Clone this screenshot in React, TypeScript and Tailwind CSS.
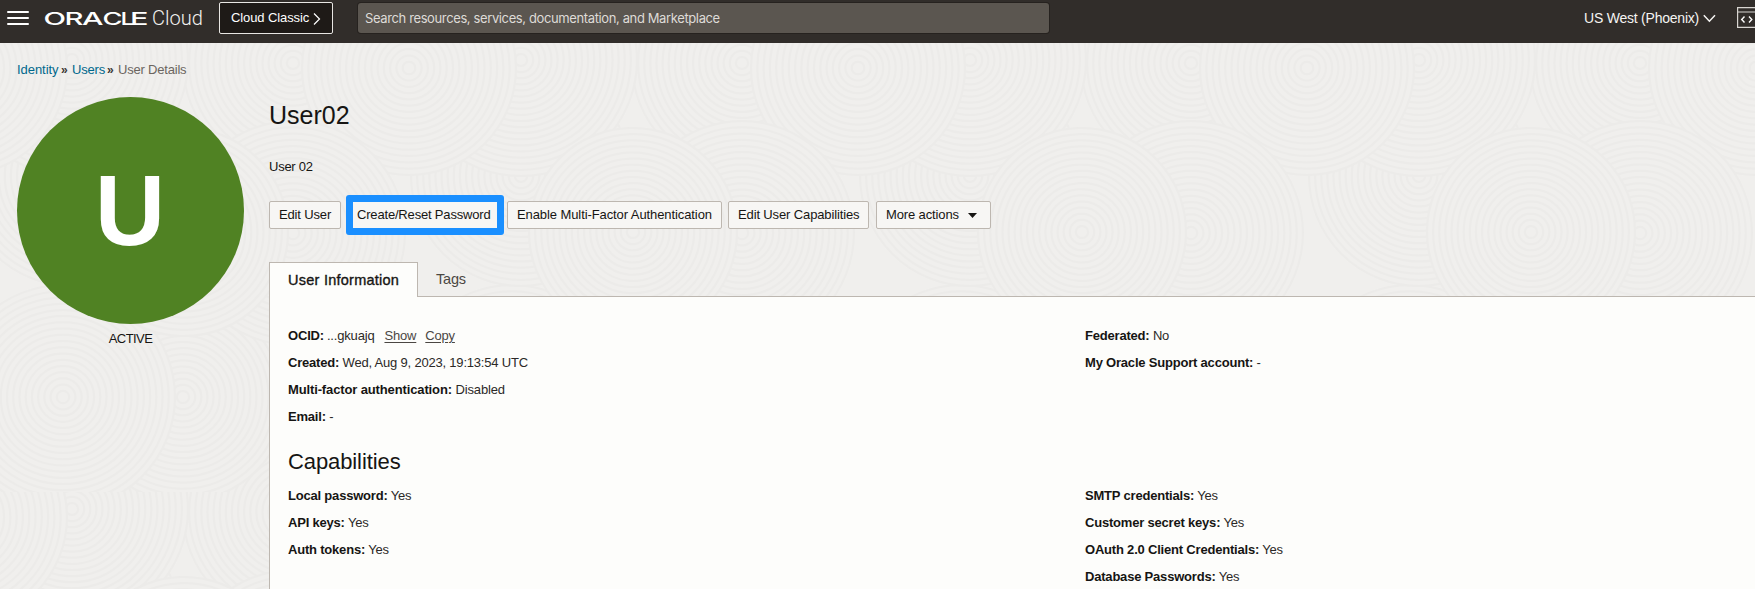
import type { ReactNode } from "react";

type Disc = { cx: number; cy: number; r: number };

const TILE = 449;

const discs: Disc[] = [
  { cx: 113, cy: 469, r: 110 },
  { cx: 341, cy: 466, r: 116 },
  { cx: 229, cy: 474, r: 107 },
  { cx: 3, cy: 354, r: 104 },
  { cx: 332, cy: 354, r: 112 },
  { cx: 341, cy: 133, r: 110 },
  { cx: 113, cy: 20, r: 110 },
  { cx: 341, cy: 17, r: 116 },
  { cx: 229, cy: 25, r: 107 },
  { cx: 113, cy: 190, r: 112 },
  { cx: 4, cy: 189, r: 104 },
];

function Rings({ cx, cy, r }: Disc) {
  const count = Math.floor(r / 6);
  return (
    <g>
      <circle cx={cx} cy={cy} r={r} fill="#f0efed" />
      {Array.from({ length: count }, (_, i) => (
        <circle key={i} cx={cx} cy={cy} r={(r * (i + 1)) / count} fill="none" stroke="#ecebe9" strokeWidth="2" />
      ))}
    </g>
  );
}

function Backdrop() {
  return (
    <svg className="absolute inset-0 h-full w-full" aria-hidden="true">
      <defs>
        <pattern id="rings" x="180" y="0" width={TILE} height={TILE} patternUnits="userSpaceOnUse">
          {discs.map((d, i) => (
            <g key={i}>
              <Rings {...d} />
              <Rings {...d} cx={d.cx < TILE / 2 ? d.cx + TILE : d.cx - TILE} />
            </g>
          ))}
        </pattern>
      </defs>
      <rect width="100%" height="100%" fill="url(#rings)" />
    </svg>
  );
}

const wordmark = [
  { ch: "O", x: -0.5, w: 22.5 },
  { ch: "R", x: 20.5, w: 19 },
  { ch: "A", x: 38, w: 21.5 },
  { ch: "C", x: 58.5, w: 20 },
  { ch: "L", x: 76.5, w: 14 },
  { ch: "E", x: 86, w: 18.5 },
];

function Header() {
  return (
    <header className="flex h-[43px] shrink-0 items-start overflow-hidden bg-[#312d2a] text-[#f5f4f2]">
      <div className="mt-[11px] ml-[7px] flex w-[22px] shrink-0 flex-col gap-[4px]">
        <span className="h-[2px] rounded-full bg-white" />
        <span className="h-[2px] rounded-full bg-white" />
        <span className="h-[2px] rounded-full bg-white" />
      </div>
      <svg className="mt-[6px] ml-[15px] shrink-0" width="160" height="26" viewBox="0 0 160 26">
        {wordmark.map(({ ch, x, w }) => (
          <text key={ch} x={x} y="19" textLength={w} lengthAdjust="spacingAndGlyphs" fill="#fff" className="font-['Inter'] text-[17.5px] font-medium">{ch}</text>
        ))}
        <text x="108" y="19" textLength="51" lengthAdjust="spacingAndGlyphs" fill="#f2f1ef" className="font-['Roboto'] text-[19.5px] font-light">Cloud</text>
      </svg>
      <button className="mt-[2px] ml-[15px] flex h-[32px] w-[114px] shrink-0 items-center rounded-[2px] border border-[#e8e6e3] bg-[#1e1a17] pl-[11px] text-[13px] tracking-[-0.1px] text-white">
        <span className="w-[82px] text-left">Cloud Classic</span>
        <svg className="mt-[2px]" width="8" height="12" viewBox="0 0 8 12" fill="none" stroke="currentColor" strokeWidth="1.2"><path d="M1 0.5 6.5 6 1 11.5" /></svg>
      </button>
      <div className="mt-[3px] ml-[25px] h-[30px] w-[691px] shrink-0 rounded-[3px] bg-[#5b5650] pl-[7px] font-['Inter'] text-[13px] leading-[31px] tracking-[-0.38px] text-[#dedbd7] shadow-[0_0_0_1px_#26221f]">
        Search resources, services, documentation, and Marketplace
      </div>
      <div className="mt-[6px] ml-[535px] flex h-[24px] shrink-0 items-center text-[14px] tracking-[-0.22px]">
        <span className="w-[119px]">US West (Phoenix)</span>
        <svg className="mr-px" width="13" height="9" viewBox="0 0 13 9" fill="none" stroke="currentColor" strokeWidth="1.5"><path d="M0.8 1.2 6.4 7.2 12 1.2" /></svg>
      </div>
      <svg className="mt-[7px] ml-[20px] shrink-0" width="26" height="22" viewBox="0 0 26 22" fill="none" stroke="#d8d5d1">
        <path d="M0.6 0.6H25.4V20.4H0.6Z M0.6 5H25.4" strokeWidth="1.2" />
        <path d="M7.5 9.5 4.7 12.5 7.5 15.5 M12 9.5 14.8 12.5 12 15.5" stroke="#fff" strokeWidth="1.4" />
      </svg>
    </header>
  );
}

function Action({ className, children }: { className: string; children: ReactNode }) {
  return (
    <button className={`flex h-[28px] shrink-0 items-center rounded-[2px] border border-[#bdb7b0] bg-[#f7f6f4] pl-[9px] text-[13px] whitespace-nowrap ${className}`}>
      {children}
    </button>
  );
}

function Field({ label, value }: { label: string; value: string }) {
  return (
    <div className="h-[27px] text-[13px] leading-[27px] tracking-[-0.2px] whitespace-nowrap">
      <b>{label}:</b> <span className="text-[#2b2927]">{value}</span>
    </div>
  );
}

export default function App() {
  return (
    <div className="flex h-[589px] w-[1755px] flex-col overflow-hidden bg-[#f0efed] font-['Liberation_Sans',Arial,sans-serif] text-[#161513]">
      <Header />
      <div className="relative flex-1 overflow-hidden">
        <Backdrop />
        <div className="relative flex h-full flex-col">
          <nav className="flex h-[54px] shrink-0 items-start pt-[17px] pl-[17px] text-[13px] leading-[20px] tracking-[-0.2px] text-[#00688c]">
            <a className="w-[44px] tracking-[-0.05px]">Identity</a>
            <span className="w-[11px] text-[12px] font-bold text-[#3a3632]">»</span>
            <a className="w-[35px]">Users</a>
            <span className="w-[11px] text-[12px] font-bold text-[#3a3632]">»</span>
            <span className="text-[#6b6560]">User Details</span>
          </nav>
          <div className="flex min-h-0 flex-1">
            <aside className="flex w-[269px] shrink-0 flex-col pl-[17px]">
              <div className="flex h-[227px] w-[227px] items-center justify-center rounded-full bg-[#508223] pb-[2px] text-[100px] leading-none font-bold text-white">
                <span className="scale-x-[0.97]">U</span>
              </div>
              <div className="w-[227px] pt-[5px] text-center text-[13px] leading-[20px] tracking-[-0.55px]">ACTIVE</div>
            </aside>
            <main className="flex min-w-0 flex-1 flex-col">
              <h1 className="h-[60px] shrink-0 pt-px text-[25px] leading-[34px]">User02</h1>
              <p className="h-[44px] shrink-0 text-[13px] leading-[19px] tracking-[-0.25px]">User 02</p>
              <div className="flex h-[61px] shrink-0 items-start">
                <Action className="w-[72px] tracking-[-0.15px]">Edit User</Action>
                <div className="mt-[-6px] ml-[5px] flex h-[40px] w-[158px] shrink-0 items-center rounded-[3px] border-[7px] border-[#1a8fff] bg-[#f7f6f4] pl-[4px] text-[13px] tracking-[-0.18px] whitespace-nowrap">Create/Reset Password</div>
                <Action className="ml-[3px] w-[215px] tracking-[-0.09px]">Enable Multi-Factor Authentication</Action>
                <Action className="ml-[6px] w-[141px] tracking-[-0.13px]">Edit User Capabilities</Action>
                <Action className="ml-[7px] w-[115px] tracking-[-0.13px]">
                  <span className="w-[82px] text-left">More actions</span>
                  <svg width="9" height="5" viewBox="0 0 9 5"><path d="M0 0H9L4.5 5Z" fill="#161513" /></svg>
                </Action>
              </div>
              <div className="flex h-[34px] shrink-0 text-[14.5px]">
                <div className="z-10 -mb-px w-[149px] border border-b-0 border-[#bdb7b0] bg-[#fdfdfb] pl-[18px] leading-[35px] tracking-[0.25px] [-webkit-text-stroke:0.35px_#161513]">User Information</div>
                <div className="pl-[18px] leading-[35px] tracking-[-0.2px] text-[#4b4743]">Tags</div>
              </div>
              <section className="min-h-0 flex-1 overflow-hidden border-t border-l border-[#bdb7b0] bg-[#fdfdfb] pt-[25px] pl-[18px]">
                <div className="grid grid-cols-[797px_1fr]">
                  <div>
                    <div className="flex h-[27px] text-[13px] leading-[27px] tracking-[-0.18px]">
                      <b className="mr-[3px]">OCID:</b>
                      <span className="text-[#2b2927]">...gkuajq</span>
                      <a className="ml-[10px] text-[#4b4743] underline underline-offset-2">Show</a>
                      <a className="ml-[9px] text-[#4b4743] underline underline-offset-2">Copy</a>
                    </div>
                    <Field label="Created" value="Wed, Aug 9, 2023, 19:13:54 UTC" />
                    <div className="h-[27px] text-[13px] leading-[27px] tracking-[-0.13px]">
                      <b>Multi-factor authentication:</b> <span className="text-[#2b2927]">Disabled</span>
                    </div>
                    <Field label="Email" value="-" />
                  </div>
                  <div>
                    <Field label="Federated" value="No" />
                    <Field label="My Oracle Support account" value="-" />
                  </div>
                </div>
                <h2 className="h-[52px] pt-[17px] text-[22px] leading-[30px] tracking-[-0.1px]">Capabilities</h2>
                <div className="grid grid-cols-[797px_1fr]">
                  <div>
                    <Field label="Local password" value="Yes" />
                    <Field label="API keys" value="Yes" />
                    <Field label="Auth tokens" value="Yes" />
                  </div>
                  <div>
                    <Field label="SMTP credentials" value="Yes" />
                    <Field label="Customer secret keys" value="Yes" />
                    <Field label="OAuth 2.0 Client Credentials" value="Yes" />
                    <Field label="Database Passwords" value="Yes" />
                  </div>
                </div>
              </section>
            </main>
          </div>
        </div>
      </div>
    </div>
  );
}
